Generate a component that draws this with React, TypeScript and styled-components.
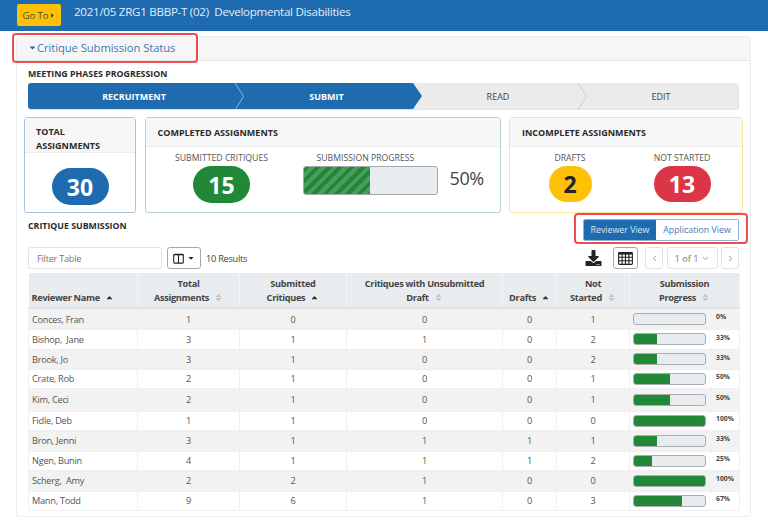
import React from "react";
import styled, { createGlobalStyle } from "styled-components";
import { FaCaretDown, FaCaretRight, FaCaretUp, FaDownload, FaSort } from "react-icons/fa";
import { LuChevronDown, LuChevronLeft, LuChevronRight } from "react-icons/lu";

const BLUE = "#1e6bb0";
const GREEN = "#218838";
const TEXT = "#212529";
const FONT = '"Open Sans", "Noto Sans", sans-serif';

const GlobalStyle = createGlobalStyle`
  html, body {
    margin: 0;
    background: #fff;
    font-family: ${FONT};
    color: ${TEXT};
  }
  * { box-sizing: border-box; }
`;

const Page = styled.div`
  width: 768px;
  height: 524px;
  overflow: hidden;
  position: relative;
`;

const TopBar = styled.header`
  height: 31px;
  background: ${BLUE};
  display: flex;
  align-items: flex-start;
  padding-left: 17px;
  margin-bottom: 5px;
`;

const GoTo = styled.button`
  width: 44px;
  height: 22px;
  margin-top: 4px;
  padding: 0;
  border: 0;
  border-radius: 2px;
  background: #ffc107;
  color: #4a4a3a;
  font: 9.5px ${FONT};
  display: flex;
  align-items: center;
  justify-content: center;
  svg { width: 7px; height: 7px; color: #333; }
`;

const MeetingTitle = styled.div`
  margin: 3px 0 0 13px;
  color: #e4edf6;
  font-size: 11.6px;
  letter-spacing: -0.28px;
  line-height: 18px;
  white-space: pre;
`;

const Panel = styled.section`
  margin: 0 17px 0 16px;
  height: 481px;
  border: 1px solid #ececec;
  border-radius: 3px;
`;

const PanelHead = styled.div`
  height: 24px;
  background: #f6f6f6;
  border-bottom: 1px solid #e6e6e6;
  padding: 0 0 3px 11px;
  display: flex;
  align-items: center;
  color: #3f78b3;
  font-size: 11.2px;
  letter-spacing: -0.05px;
  svg { width: 9px; height: 9px; color: ${BLUE}; }
`;

const PanelBody = styled.div`
  padding: 7px 11px 0;
`;

const SectionTitle = styled.h2`
  margin: 0;
  font-size: 8.8px;
  line-height: 13px;
  font-weight: 700;
  color: #2b2b2b;
`;

const Stepper = styled.div`
  margin-top: 2px;
  height: 27px;
  display: grid;
  grid-template-columns: 212px 173px 170px 156px;
  border-radius: 3px;
  background: #ebebeb;
  border: 1px solid #e2e2e2;
  border-width: 0 1px 1px 0;
`;

const Step = styled.div<{ $done?: boolean; $tip?: boolean; $first?: boolean }>`
  position: relative;
  display: flex;
  align-items: center;
  justify-content: center;
  font-size: 9px;
  font-weight: ${(p) => (p.$done ? 700 : 400)};
  color: ${(p) => (p.$done ? "#fff" : "#444")};
  background: ${(p) => (p.$done ? BLUE : "transparent")};
  border-radius: ${(p) => (p.$first ? "3px 0 0 3px" : "0")};
  ${(p) =>
    p.$tip &&
    `&::after {
      content: "";
      position: absolute;
      left: 100%;
      top: 0;
      width: 9px;
      height: 100%;
      background: ${BLUE};
      clip-path: polygon(0 0, 100% 50%, 0 100%);
    }`}
`;

const Divider = styled.svg`
  position: absolute;
  left: 100%;
  top: 0;
  width: 9px;
  height: 27px;
  margin-left: -5px;
  z-index: 1;
`;

const StatRow = styled.div`
  margin: 7px -4px 0;
  display: grid;
  grid-template-columns: 112px 356px 234px;
  justify-content: space-between;
  height: 96px;
`;

const StatCard = styled.div<{ $edge: string }>`
  border: 1px solid ${(p) => p.$edge};
  border-radius: 3px;
  display: flex;
  flex-direction: column;
`;

const StatHead = styled.div<{ $tall?: boolean }>`
  height: ${(p) => (p.$tall ? 35 : 29)}px;
  flex: none;
  padding: ${(p) => (p.$tall ? "7px" : "8px")} 11px 0 ${(p) => (p.$tall ? 11 : 12)}px;
  background: #f7f7f7;
  border-bottom: 1px solid #ececec;
  font-size: 9px;
  font-weight: 700;
  line-height: 14px;
  color: #2b2b2b;
`;

const StatBody = styled.div<{ $cols: string }>`
  flex: 1;
  display: grid;
  grid-template-columns: ${(p) => p.$cols};
  justify-items: center;
  align-content: start;
  padding-top: 5px;
`;

const Metric = styled.div`
  display: flex;
  flex-direction: column;
  align-items: center;
`;

const ProgressMetric = styled(Metric)`
  align-items: flex-start;
  justify-self: start;
  margin-left: 5px;
`;

const MetricLabel = styled.div`
  font-size: 8.7px;
  line-height: 13px;
  color: #555;
  white-space: nowrap;
`;

const ProgressLabel = styled(MetricLabel)`
  margin-left: 14px;
`;

const Pill = styled.div<{ $bg: string; $fg?: string; $w: number; $h?: number }>`
  margin-top: 1px;
  width: ${(p) => p.$w}px;
  height: ${(p) => p.$h ?? 37}px;
  border-radius: 19px;
  background: ${(p) => p.$bg};
  color: ${(p) => p.$fg ?? "#fff"};
  display: flex;
  align-items: center;
  justify-content: center;
  font-size: 23px;
  font-weight: 700;
`;

const TotalBody = styled(StatBody)`
  padding-top: 14px;
`;

const BigBarRow = styled.div`
  margin-top: 1px;
  display: flex;
  align-items: center;
  gap: 12px;
`;

const BigBar = styled.div`
  width: 135px;
  height: 29px;
  border: 1px solid #a5a8ab;
  border-radius: 3px;
  background: #e9ecef;
  overflow: hidden;
`;

const BigFill = styled.div`
  width: 50%;
  height: 100%;
  background: repeating-linear-gradient(
    135deg,
    #218838 0 4px,
    #4c9c5e 4px 8px
  );
`;

const BigPct = styled.div`
  font-size: 18px;
  letter-spacing: -0.4px;
  color: #444;
  margin-top: -5px;
`;

const SubmissionHead = styled.div`
  margin-top: 6px;
  height: 22px;
  display: flex;
  justify-content: space-between;
  align-items: flex-start;
`;

const SubmissionTitle = styled(SectionTitle)`
  margin-top: 1px;
`;

const ViewToggle = styled.div`
  display: flex;
  height: 22px;
  border: 1px solid #8db4d8;
  border-radius: 2px;
  overflow: hidden;
`;

const ViewButton = styled.div<{ $on?: boolean }>`
  width: ${(p) => (p.$on ? 72 : 82)}px;
  display: flex;
  align-items: center;
  justify-content: center;
  background: ${(p) => (p.$on ? BLUE : "#fff")};
  color: ${(p) => (p.$on ? "#dfe9f3" : "#3f78b3")};
  font-size: 8.8px;
`;

const Toolbar = styled.div`
  margin-top: 6px;
  height: 22px;
  display: flex;
  align-items: center;
`;

const FilterBox = styled.div`
  width: 134px;
  height: 22px;
  border: 1px solid #e4e4e4;
  border-radius: 2px;
  padding-left: 8px;
  display: flex;
  align-items: center;
  color: #777;
  font-size: 9.2px;
  letter-spacing: -0.25px;
`;

const IconButton = styled.div<{ $w: number; $strong?: boolean }>`
  width: ${(p) => p.$w}px;
  height: 22px;
  border: 1px solid ${(p) => (p.$strong ? "#a8a8a8" : "#e2e2e2")};
  border-radius: 3px;
  display: flex;
  align-items: center;
  justify-content: center;
  color: ${(p) => (p.$strong ? "#222" : "#777")};
  font-size: 9.2px;
`;

const ColumnButton = styled(IconButton)`
  margin-left: 5px;
  gap: 3px;
  svg:first-child { width: 11px; height: 11px; }
  svg:last-child { width: 8px; height: 8px; }
`;

const ResultCount = styled.div`
  margin-left: 5px;
  font-size: 9.2px;
  letter-spacing: -0.25px;
  color: #444;
`;

const ToolRight = styled.div`
  margin-left: auto;
  display: flex;
  align-items: center;
`;

const ExportIcon = styled.div`
  margin-right: 11px;
  display: flex;
  color: #222;
  svg { width: 17px; height: 16px; }
`;

const GridButton = styled(IconButton)`
  margin-right: 7px;
  svg { width: 15px; height: 13px; }
`;

const Pager = styled(IconButton)`
  svg { width: 9px; height: 9px; }
`;

const PageLabel = styled(IconButton)`
  margin: 0 3px 0 4px;
  gap: 3px;
  svg { width: 9px; height: 9px; }
`;

const Table = styled.table`
  margin-top: 4px;
  width: 711px;
  table-layout: fixed;
  border-collapse: collapse;
  font-size: 9.2px;
  letter-spacing: -0.25px;
`;

const HeadCell = styled.th<{ $left?: boolean }>`
  height: 35px;
  padding: 0 0 2px ${(p) => (p.$left ? "3px" : "0")};
  background: #e9ecef;
  border-right: 1px solid #f2f3f5;
  border-bottom: 2px solid #dee2e6;
  vertical-align: bottom;
  text-align: ${(p) => (p.$left ? "left" : "center")};
  line-height: 14px;
  font-size: 9.2px;
  letter-spacing: -0.3px;
  font-weight: 700;
  color: #444;
`;

const SortMark = styled.span<{ $active?: boolean }>`
  display: inline-block;
  margin-left: 5px;
  color: ${(p) => (p.$active ? "#333" : "#c2c6ca")};
  vertical-align: -1px;
  svg { width: 9px; height: 9px; display: block; }
`;

const Row = styled.tr<{ $h: number; $odd: boolean }>`
  height: ${(p) => p.$h}px;
  background: ${(p) => (p.$odd ? "#f2f2f2" : "#fff")};
  border-bottom: 1px solid #eceef0;
`;

const Cell = styled.td<{ $left?: boolean }>`
  padding: 1px 0 0 ${(p) => (p.$left ? "3px" : "0")};
  text-align: ${(p) => (p.$left ? "left" : "center")};
  border-right: 1px solid #eef0f2;
  color: #555;
  white-space: pre;
  line-height: 1;
  &:first-child { border-left: 1px solid #eef0f2; }
`;

const ProgressCell = styled.div`
  display: flex;
  align-items: center;
  padding-left: 3px;
  margin-top: -1px;
`;

const MiniBar = styled.div`
  width: 73px;
  height: 12px;
  border: 1px solid #a9adb1;
  border-radius: 3px;
  background: #e9ecef;
  overflow: hidden;
  flex: none;
`;

const MiniFill = styled.div`
  height: 100%;
  background: ${GREEN};
`;

const MiniPct = styled.span`
  margin: -2px 0 0 10px;
  font-size: 6.8px;
  letter-spacing: 0;
  font-weight: 700;
  color: #444;
`;

const Highlight = styled.div`
  position: absolute;
  border: 2px solid #ea4f4f;
  border-radius: 4px;
  pointer-events: none;
`;

const HeaderHighlight = styled(Highlight)`
  left: 12px;
  top: 33px;
  width: 186px;
  height: 30px;
`;

const ToggleHighlight = styled(Highlight)`
  left: 574px;
  top: 213px;
  width: 174px;
  height: 31px;
`;

const columns = [
  { width: 109, label: ["Reviewer Name"], active: true, left: true },
  { width: 102, label: ["Total", "Assignments"] },
  { width: 107, label: ["Submitted", "Critiques"], active: true },
  { width: 156, label: ["Critiques with Unsubmitted", "Draft"] },
  { width: 54, label: ["Drafts"], active: true },
  { width: 73, label: ["Not", "Started"] },
  { width: 110, label: ["Submission", "Progress"] },
];

const rows = [
  { name: "Conces, Fran", vals: [1, 0, 0, 0, 1], pct: 0, h: 21 },
  { name: "Bishop,  Jane", vals: [3, 1, 1, 0, 2], pct: 33, h: 20 },
  { name: "Brook, Jo", vals: [3, 1, 0, 0, 2], pct: 33, h: 20 },
  { name: "Crate, Rob", vals: [2, 1, 0, 0, 1], pct: 50, h: 19 },
  { name: "Kim, Ceci", vals: [2, 1, 0, 0, 1], pct: 50, h: 23 },
  { name: "Fidle, Deb", vals: [1, 1, 0, 0, 0], pct: 100, h: 19 },
  { name: "Bron, Jenni", vals: [3, 1, 1, 1, 1], pct: 33, h: 21 },
  { name: "Ngen, Bunin", vals: [4, 1, 1, 1, 2], pct: 25, h: 19 },
  { name: "Scherg,  Amy", vals: [2, 2, 1, 0, 0], pct: 100, h: 21 },
  { name: "Mann, Todd", vals: [9, 6, 1, 0, 3], pct: 67, h: 19 },
];

const Chevron = () => (
  <Divider viewBox="0 0 9 27">
    <polyline points="0,0 8.5,13.5 0,27" fill="none" stroke="#c4c8cc" strokeWidth="0.8" />
  </Divider>
);

const ColumnsGlyph = () => (
  <svg viewBox="0 0 12 12" fill="none" stroke="currentColor">
    <rect x="0.75" y="1.5" width="10.5" height="9.5" rx="1" strokeWidth="1.2" />
    <path d="M6 1.5v9.5" strokeWidth="1.2" />
    <path d="M0.75 2h10.5" strokeWidth="1" />
  </svg>
);

const TableGlyph = () => (
  <svg viewBox="0 0 15 13" fill="none" stroke="currentColor" strokeWidth="1.1">
    <rect x="0.6" y="0.6" width="13.8" height="11.8" rx="0.8" />
    <path d="M0.6 1.6h13.8" strokeWidth="2" />
    <path d="M0.6 5.3h13.8M0.6 8.8h13.8M4.1 1v11.4M7.5 1v11.4M10.9 1v11.4" />
  </svg>
);

export default function App() {
  return (
    <Page>
      <GlobalStyle />
      <TopBar>
        <GoTo>
          Go To
          <FaCaretRight />
        </GoTo>
        <MeetingTitle>2021/05 ZRG1 BBBP-T (02)  Developmental Disabilities</MeetingTitle>
      </TopBar>
      <Panel>
        <PanelHead>
          <FaCaretDown />
          Critique Submission Status
        </PanelHead>
        <PanelBody>
          <SectionTitle>MEETING PHASES PROGRESSION</SectionTitle>
          <Stepper>
            <Step $done $first>
              RECRUITMENT
              <Chevron />
            </Step>
            <Step $done $tip>
              SUBMIT
            </Step>
            <Step>
              READ
              <Chevron />
            </Step>
            <Step>EDIT</Step>
          </Stepper>

          <StatRow>
            <StatCard $edge="#a5c4e2">
              <StatHead $tall>TOTAL ASSIGNMENTS</StatHead>
              <TotalBody $cols="1fr">
                <Pill $bg={BLUE} $w={57}>
                  30
                </Pill>
              </TotalBody>
            </StatCard>
            <StatCard $edge="#b5d6bc">
              <StatHead>COMPLETED ASSIGNMENTS</StatHead>
              <StatBody $cols="152px 1fr">
                <Metric>
                  <MetricLabel>SUBMITTED CRITIQUES</MetricLabel>
                  <Pill $bg={GREEN} $w={57}>
                    15
                  </Pill>
                </Metric>
                <ProgressMetric>
                  <ProgressLabel>SUBMISSION PROGRESS</ProgressLabel>
                  <BigBarRow>
                    <BigBar>
                      <BigFill />
                    </BigBar>
                    <BigPct>50%</BigPct>
                  </BigBarRow>
                </ProgressMetric>
              </StatBody>
            </StatCard>
            <StatCard $edge="#fbe3a0">
              <StatHead>INCOMPLETE ASSIGNMENTS</StatHead>
              <StatBody $cols="120px 104px">
                <Metric>
                  <MetricLabel>DRAFTS</MetricLabel>
                  <Pill $bg="#ffc107" $fg={TEXT} $w={43} $h={36}>
                    2
                  </Pill>
                </Metric>
                <Metric>
                  <MetricLabel>NOT STARTED</MetricLabel>
                  <Pill $bg="#dc3545" $w={57} $h={36}>
                    13
                  </Pill>
                </Metric>
              </StatBody>
            </StatCard>
          </StatRow>

          <SubmissionHead>
            <SubmissionTitle>CRITIQUE SUBMISSION</SubmissionTitle>
            <ViewToggle>
              <ViewButton $on>Reviewer View</ViewButton>
              <ViewButton>Application View</ViewButton>
            </ViewToggle>
          </SubmissionHead>

          <Toolbar>
            <FilterBox>Filter Table</FilterBox>
            <ColumnButton $w={34} $strong>
              <ColumnsGlyph />
              <FaCaretDown />
            </ColumnButton>
            <ResultCount>10 Results</ResultCount>
            <ToolRight>
              <ExportIcon>
                <FaDownload />
              </ExportIcon>
              <GridButton $w={25} $strong>
                <TableGlyph />
              </GridButton>
              <Pager $w={18}>
                <LuChevronLeft />
              </Pager>
              <PageLabel $w={51}>
                1 of 1
                <LuChevronDown />
              </PageLabel>
              <Pager $w={18}>
                <LuChevronRight />
              </Pager>
            </ToolRight>
          </Toolbar>

          <Table>
            <colgroup>
              {columns.map((c) => (
                <col key={c.label[0]} width={c.width} />
              ))}
            </colgroup>
            <thead>
              <tr>
                {columns.map((c) => (
                  <HeadCell key={c.label[0]} $left={c.left}>
                    {c.label.map((line, i) => (
                      <React.Fragment key={line}>
                        {i > 0 && <br />}
                        {line}
                      </React.Fragment>
                    ))}
                    <SortMark $active={c.active}>{c.active ? <FaCaretUp /> : <FaSort />}</SortMark>
                  </HeadCell>
                ))}
              </tr>
            </thead>
            <tbody>
              {rows.map((r, i) => (
                <Row key={r.name} $h={r.h} $odd={i % 2 === 0}>
                  <Cell $left>{r.name}</Cell>
                  {r.vals.map((v, j) => (
                    <Cell key={j}>{v}</Cell>
                  ))}
                  <Cell>
                    <ProgressCell>
                      <MiniBar>
                        <MiniFill style={{ width: `${r.pct}%` }} />
                      </MiniBar>
                      <MiniPct>{r.pct}%</MiniPct>
                    </ProgressCell>
                  </Cell>
                </Row>
              ))}
            </tbody>
          </Table>
        </PanelBody>
      </Panel>
      <HeaderHighlight />
      <ToggleHighlight />
    </Page>
  );
}
